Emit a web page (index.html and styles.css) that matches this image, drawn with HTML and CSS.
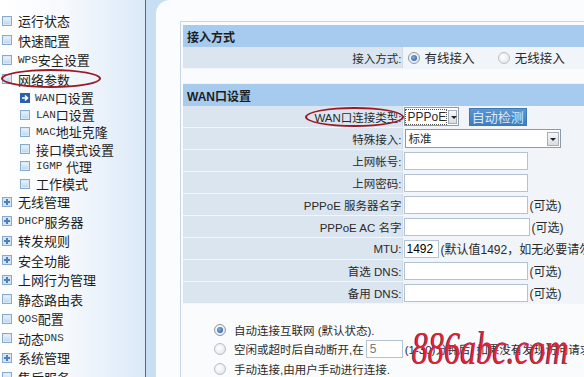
FILE: index.html
```html
<!DOCTYPE html>
<html lang="zh-CN">
<head>
    <meta charset="UTF-8">
    <title>网络参数 - WAN口设置</title>
    <link rel="stylesheet" href="styles.css">
</head>
<body>

    <div class="side">
        <ul class="menu">
            <li class="item"><span class="ico"></span>运行状态</li>
            <li class="item"><span class="ico"></span>快速配置</li>
            <li class="item"><span class="ico"></span><span class="latin">WPS</span>安全设置</li>
            <li class="item"><span class="ico"></span>网络参数</li>
            <li class="sub">
                <svg class="arrow" width="10" height="10" viewBox="0 0 10 10">
                    <rect x="0" y="0" width="10" height="10" fill="#2c5fae"/>
                    <path d="M2 5 H7 M5 2.5 L7.5 5 L5 7.5" stroke="#fff" stroke-width="1.6" fill="none"/>
                </svg>
                <span class="latin">WAN</span>口设置
            </li>
            <li class="sub"><span class="ico"></span><span class="latin">LAN</span>口设置</li>
            <li class="sub"><span class="ico"></span><span class="latin">MAC</span>地址克隆</li>
            <li class="sub"><span class="ico"></span>接口模式设置</li>
            <li class="sub"><span class="ico"></span><span class="latin">IGMP</span>&nbsp;代理</li>
            <li class="sub"><span class="ico"></span>工作模式</li>
            <li class="item"><span class="ico plus"></span>无线管理</li>
            <li class="item"><span class="ico plus"></span><span class="latin">DHCP</span>服务器</li>
            <li class="item"><span class="ico plus"></span>转发规则</li>
            <li class="item"><span class="ico plus"></span>安全功能</li>
            <li class="item"><span class="ico plus"></span>上网行为管理</li>
            <li class="item"><span class="ico"></span>静态路由表</li>
            <li class="item"><span class="ico"></span><span class="latin">QOS</span>配置</li>
            <li class="item"><span class="ico"></span>动态<span class="latin">DNS</span></li>
            <li class="item"><span class="ico plus"></span>系统管理</li>
            <li class="item"><span class="ico"></span>售后服务</li>
        </ul>
    </div>

    <div class="gutter">
        <div class="main">
            <div class="panel">
                <table class="form">
                    <colgroup>
                        <col class="col-lbl">
                        <col>
                    </colgroup>
                    <tr><th colspan="2">接入方式</th></tr>
                    <tr>
                        <td class="lbl">接入方式:</td>
                        <td class="val">
                            <span class="radio on"></span><span class="choice">有线接入</span>
                            <span class="radio"></span><span class="choice">无线接入</span>
                        </td>
                    </tr>
                    <tr class="gap"><td colspan="2"></td></tr>
                    <tr><th colspan="2">WAN口设置</th></tr>
                    <tr>
                        <td class="lbl">WAN口连接类型:</td>
                        <td class="val">
                            <span class="select small"><span class="sel-text focus">PPPoE</span><span class="drop"></span></span>
                            <button class="detect">自动检测</button>
                        </td>
                    </tr>
                    <tr>
                        <td class="lbl">特殊接入:</td>
                        <td class="val"><span class="select wide"><span class="sel-text">标准</span><span class="drop"></span></span></td>
                    </tr>
                    <tr>
                        <td class="lbl">上网帐号:</td>
                        <td class="val"><input class="field" type="text"></td>
                    </tr>
                    <tr>
                        <td class="lbl">上网密码:</td>
                        <td class="val"><input class="field" type="password"></td>
                    </tr>
                    <tr>
                        <td class="lbl">PPPoE 服务器名字</td>
                        <td class="val"><input class="field" type="text"><span class="hint">(可选)</span></td>
                    </tr>
                    <tr>
                        <td class="lbl">PPPoE AC 名字</td>
                        <td class="val"><input class="field ac" type="text"><span class="hint">(可选)</span></td>
                    </tr>
                    <tr>
                        <td class="lbl">MTU:</td>
                        <td class="val"><input class="field mtu" type="text" value="1492"><span class="hint">(默认值1492，如无必要请勿修改)</span></td>
                    </tr>
                    <tr>
                        <td class="lbl">首选 DNS:</td>
                        <td class="val"><input class="field" type="text"><span class="hint">(可选)</span></td>
                    </tr>
                    <tr>
                        <td class="lbl">备用 DNS:</td>
                        <td class="val"><input class="field" type="text"><span class="hint">(可选)</span></td>
                    </tr>
                </table>

                <div class="opts">
                    <div class="opt"><span class="radio on"></span>自动连接互联网 (默认状态).</div>
                    <div class="opt"><span class="radio"></span>空闲或超时后自动断开,在 <input class="field mins" type="text" value="5"> (1-30)分钟后, 如果没有发现访问请求</div>
                    <div class="opt"><span class="radio"></span>手动连接,由用户手动进行连接.</div>
                </div>
            </div>
        </div>
    </div>

    <!-- annotation marks over the screenshot -->
    <div class="mark mark-menu"></div>
    <div class="mark mark-type"></div>
    <div class="watermark">886abc.com</div>

</body>
</html>
```

FILE: styles.css
```css
body {
    margin: 0;
    width: 584px;
    height: 377px;
    overflow: hidden;
    display: flex;
    position: relative;
    font-family: "Liberation Sans", "Noto Sans CJK SC", sans-serif;
    color: #2a2a2a;
    background: #fff;
}

/* Left menu */
.side {
    width: 145px;
    flex: none;
    overflow: hidden;
    border-right: 1px solid #56687a;
    background: linear-gradient(to right, #ffffff 0%, #f6f9fd 45%, #dbe9f7 100%);
}
.menu {
    list-style: none;
    margin: 0;
    padding: 11px 0 0 0;
}
.menu li {
    display: flex;
    align-items: center;
    white-space: nowrap;
    font-size: 13px;
    color: #1e1e1e;
}
.item {
    height: 19.5px;
    padding-left: 2px;
}
.sub {
    height: 17.2px;
    padding-left: 20px;
}
.latin {
    font-family: "Liberation Mono", monospace;
    font-size: 11px;
    color: #333;
}
.ico {
    width: 8px;
    height: 8px;
    border: 1px solid #86aad1;
    background: linear-gradient(#eef5fc, #b9d3ee);
    box-shadow: inset 0 0 0 1px #dbe8f6;
    margin-right: 6px;
    position: relative;
    flex: none;
}
.plus {
    background: #d4e5f6;
    box-shadow: none;
}
.plus::before,
.plus::after {
    content: "";
    position: absolute;
    background: #4f7fb6;
}
.plus::before {
    left: 1px;
    top: 3px;
    width: 6px;
    height: 2px;
}
.plus::after {
    left: 3px;
    top: 1px;
    width: 2px;
    height: 6px;
}
.arrow {
    margin-right: 5px;
    flex: none;
}

/* Right area */
.gutter {
    flex: 1;
    background: #c7def3;
    padding-left: 10px;
    min-width: 0;
    overflow: hidden;
}
.main {
    box-sizing: border-box;
    height: 100%;
    width: 640px;
    background: #fbfcfd;
    border-top-left-radius: 14px;
    padding: 21px 0 0 24px;
    overflow: hidden;
}
.panel {
    box-sizing: border-box;
    width: 600px;
    border-left: 1px solid #c7d6e5;
    border-top: 1px solid #c7d6e5;
    padding: 3px 0 0 2px;
    height: 100%;
    background: #fafbfc;
}
.form {
    border-collapse: collapse;
    table-layout: fixed;
    width: 590px;
    font-size: 11.5px;
}
.col-lbl {
    width: 219px;
}
.form th {
    height: 22px;
    padding: 0 0 0 4px;
    text-align: left;
    font-weight: bold;
    font-size: 12px;
    background: #a6cbee;
    color: #1d1d1d;
}
.form td {
    height: 21px;
    padding: 0;
    border-bottom: 1px solid #f2f6fa;
    white-space: nowrap;
    overflow: hidden;
}
.lbl {
    text-align: right;
    background: #dbe5ef;
    border-right: 1px solid #cfdbe7;
}
.val {
    background: #f1f5f9;
}
.form .val {
    padding-left: 1px;
}
.gap td {
    height: 14px;
    background: #fafbfc;
}

.field {
    box-sizing: border-box;
    width: 124px;
    height: 18px;
    border: 1px solid #b4c3d3;
    background: #fff;
    padding: 0 3px;
    font: 12px "Liberation Sans", "Noto Sans CJK SC", sans-serif;
    vertical-align: middle;
    margin: 0;
}
.ac {
    width: 126px;
}
.mtu {
    width: 35px;
    padding-left: 2px;
}
.mins {
    width: 37px;
    height: 18px;
    color: #777;
    margin: 0 2px;
    flex: none;
}
.hint {
    margin-left: 2px;
    vertical-align: middle;
    font-size: 12px;
}

.select {
    display: inline-flex;
    align-items: center;
    box-sizing: border-box;
    height: 19px;
    border: 1px solid #8e9aa6;
    background: #fff;
    vertical-align: middle;
    padding: 1px;
}
.small {
    width: 55px;
    font-size: 12px;
}
.wide {
    width: 156px;
    margin-left: 1px;
}
.sel-text {
    flex: 1;
    padding-left: 2px;
    line-height: 14px;
}
.focus {
    outline: 1px dotted #555;
    margin-right: 2px;
}
.drop {
    width: 12px;
    height: 14px;
    box-sizing: border-box;
    border: 1px solid #a5aeb8;
    background: linear-gradient(#f7f8fa, #d9dde2);
    position: relative;
}
.drop::after {
    content: "";
    position: absolute;
    left: 2px;
    top: 5px;
    border-left: 3px solid transparent;
    border-right: 3px solid transparent;
    border-top: 3px solid #222;
}
.detect {
    height: 18px;
    width: 58px;
    margin-left: 7px;
    border: 1px solid #3d78b8;
    background: linear-gradient(#5b97d4, #3f7cbf);
    color: #dbe9f8;
    font: 13px "Noto Sans CJK SC", sans-serif;
    padding: 0;
    line-height: 16px;
    vertical-align: middle;
}

.radio {
    display: inline-block;
    width: 10px;
    height: 10px;
    flex: none;
    border-radius: 50%;
    border: 1px solid #b9bec4;
    background: radial-gradient(circle at 40% 40%, #fff, #dde1e5);
    vertical-align: middle;
    position: relative;
}
.radio.on {
    border-color: #8d9aa8;
}
.radio.on::after {
    content: "";
    position: absolute;
    left: 2px;
    top: 2px;
    width: 6px;
    height: 6px;
    border-radius: 50%;
    background: radial-gradient(circle at 40% 40%, #7fb0e6, #1f4f96);
}
.val .radio {
    margin-left: 4px;
}
.choice {
    margin-left: 5px;
    margin-right: 16px;
    vertical-align: middle;
    font-size: 12.5px;
}

.opts {
    padding: 16px 0 0 31px;
    font-size: 11.5px;
    white-space: nowrap;
}
.opt {
    height: 19.5px;
    display: flex;
    align-items: center;
}
.opt .radio {
    margin-right: 8px;
}

/* Overlays */
.mark {
    position: absolute;
    border: 2px solid #9c1a26;
    border-radius: 50%;
    box-sizing: border-box;
}
.mark-menu {
    left: 1px;
    top: 69px;
    width: 100px;
    height: 19px;
}
.mark-type {
    left: 305px;
    top: 107px;
    width: 99px;
    height: 20px;
}
.watermark {
    position: absolute;
    left: 412px;
    top: 322px;
    font: italic 46px "Liberation Serif", serif;
    color: #e4232c;
    text-shadow: -1px 0 0 #3a55b5;
    transform: scaleX(0.7);
    transform-origin: left top;
    white-space: nowrap;
}
```
